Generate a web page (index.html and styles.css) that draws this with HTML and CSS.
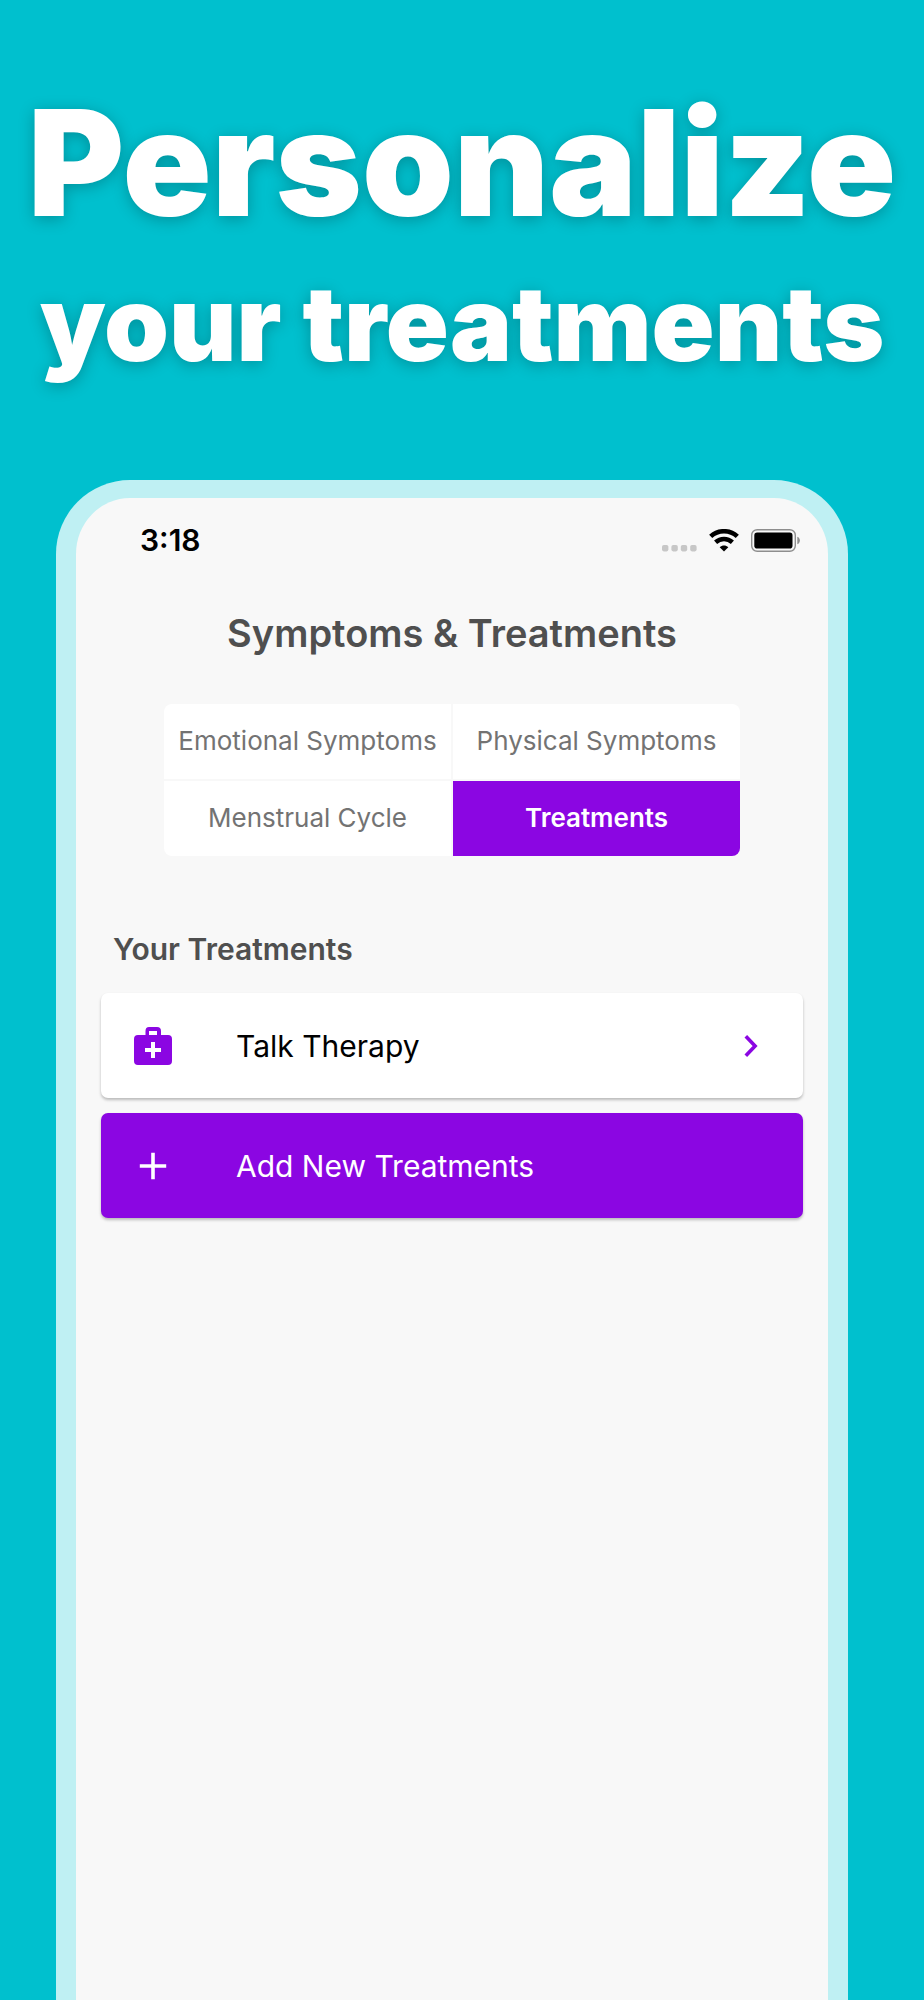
FILE: index.html
```
<!DOCTYPE html>
<html lang="en">
<head>
    <meta charset="UTF-8">
    <meta name="viewport" content="width=device-width, initial-scale=1.0">
    <title>Personalize your treatments</title>
    <link rel="stylesheet" href="styles.css">
</head>
<body>
    <h1 class="headline">
        <span class="headline-main">Personalize</span>
        <span class="headline-sub">your treatments</span>
    </h1>
    <main class="phone">
        <div class="status-bar">
            <span class="time">3:18</span>
            <div class="status-icons">
                <svg class="signal" width="35" height="23" viewBox="0 0 35 23" fill="#c7c7c7" aria-hidden="true">
                    <rect x="0" y="16" width="6.400" height="6.400" rx="1.800"/>
                    <rect x="9.400" y="16" width="6.400" height="6.400" rx="1.800"/>
                    <rect x="18.800" y="16" width="6.400" height="6.400" rx="1.800"/>
                    <rect x="28.200" y="16" width="6.400" height="6.400" rx="1.800"/>
                </svg>
                <svg class="wifi" width="30" height="23" viewBox="0 0 30 23" fill="none" stroke="#000" stroke-width="4.600" aria-hidden="true">
                    <path d="M1.700 7.400C9 .5 21 .5 28.300 7.400"/>
                    <path d="M6.600 13.200c4.800-4.300 12-4.300 16.800 0"/>
                    <path d="M15 22.600l-4.300-4.400c2.500-2.300 6.100-2.300 8.600 0z" fill="#000" stroke="none"/>
                </svg>
                <svg class="battery" width="49" height="23" viewBox="0 0 49 23" aria-hidden="true">
                    <rect x=".7" y=".7" width="43.600" height="21.600" rx="5.500" fill="none" stroke="#8e8e8e" stroke-width="1.400"/>
                    <rect x="3.300" y="3.600" width="38.200" height="16" rx="2.800"/>
                    <path d="M46.300 7.700c3.400 1.100 3.400 6.500 0 7.600z" fill="#8e8e8e"/>
                </svg>
            </div>
        </div>
        <h2 class="title">Symptoms &amp; Treatments</h2>
        <nav class="tabs">
            <button class="tab" type="button">Emotional Symptoms</button>
            <button class="tab" type="button">Physical Symptoms</button>
            <button class="tab" type="button">Menstrual Cycle</button>
            <button class="tab active" type="button">Treatments</button>
        </nav>
        <section class="treatments">
            <h3 class="section-title">Your Treatments</h3>
            <button class="card" type="button">
                <svg class="card-icon" width="38" height="38" viewBox="0 0 38 38" aria-hidden="true">
                    <path fill="currentColor" fill-rule="evenodd" d="M15 0h8q4 0 4 4v4h7q4 0 4 4v22q0 4-4 4H4q-4 0-4-4V12q0-4 4-4h7.500V4q0-4 3.500-4zm0 4v4h8V4zm2 11v6h-6v4h6v6h4v-6h6v-4h-6v-6z"/>
                </svg>
                <span class="card-label">Talk Therapy</span>
                <svg class="chevron" width="14" height="24" viewBox="0 0 14 24" fill="none" stroke="currentColor" stroke-width="3.600" aria-hidden="true">
                    <path d="M1.800 2.200l9.300 9.800-9.300 9.800"/>
                </svg>
            </button>
            <button class="card add" type="button">
                <svg class="card-icon" width="38" height="38" viewBox="0 0 38 38" fill="none" stroke="currentColor" stroke-width="3.600" aria-hidden="true">
                    <path d="M19 5.800v26.400M5.800 19h26.400"/>
                </svg>
                <span class="card-label">Add New Treatments</span>
            </button>
        </section>
    </main>
</body>
</html>
```
FILE: styles.css
```
* {
    box-sizing: border-box;
}
body {
    margin: 0;
    min-height: 100vh;
    display: flex;
    flex-direction: column;
    background: #00c0ce;
    font-family: Inter, 'Liberation Sans', sans-serif;
}
h1, h2, h3 {
    margin: 0;
}
.headline {
    padding-top: 88px;
    height: 480px;
    color: #fff;
    text-align: center;
    font-weight: 900;
    text-shadow: 0 3px 16px rgba(0, 0, 0, 0.25);
    white-space: nowrap;
}
.headline span {
    display: block;
}
.headline-main {
    font-size: 147px;
    line-height: 150px;
}
.headline-sub {
    margin-top: 31px;
    font-size: 104px;
    line-height: 108px;
}
.phone {
    flex: 1;
    margin: 0 76px 0 56px;
    border: 20px solid #bff0f3;
    border-width: 18px 20px 0;
    border-radius: 74px 74px 0 0;
    background: #f8f8f8;
}
.status-bar {
    display: flex;
    justify-content: space-between;
    align-items: center;
    padding: 24px 28px 0 64px;
}
.time {
    font-size: 30px;
    line-height: 36px;
    font-weight: 600;
}
.status-icons {
    display: flex;
    gap: 12px;
}
.title {
    margin-top: 52px;
    color: #4f4f4f;
    font-size: 38px;
    line-height: 46px;
    font-weight: 600;
    text-align: center;
}
.tabs {
    display: grid;
    grid-template-columns: 1fr 1fr;
    gap: 2px;
    margin: 48px 88px 0;
    border-radius: 8px;
    overflow: hidden;
}
.tab {
    height: 75px;
    padding: 0 0 2px;
    border: none;
    background: #fff;
    color: #737373;
    font-family: inherit;
    font-size: 26px;
    font-weight: 400;
    cursor: pointer;
}
.tab.active {
    background: #8b06e2;
    color: #fff;
    font-weight: 600;
}
.treatments {
    display: flex;
    flex-direction: column;
    gap: 15px;
    padding: 75px 25px 0;
}
.section-title {
    margin-bottom: 11px;
    padding-left: 12px;
    color: #4f4f4f;
    font-size: 30px;
    line-height: 36px;
    font-weight: 600;
}
.card {
    display: flex;
    align-items: center;
    height: 105px;
    padding: 0 45px 0 33px;
    border: none;
    border-radius: 7px;
    background: #fff;
    box-shadow: 0 2px 3px rgba(0, 0, 0, 0.25);
    color: #8b06e2;
    font-family: inherit;
    font-size: 30px;
    text-align: left;
    cursor: pointer;
}
.card-label {
    flex: 1;
    margin-left: 64px;
    color: #000;
}
.card.add {
    background: #8b06e2;
    color: #fff;
}
.card.add .card-label {
    color: #fff;
}
```
